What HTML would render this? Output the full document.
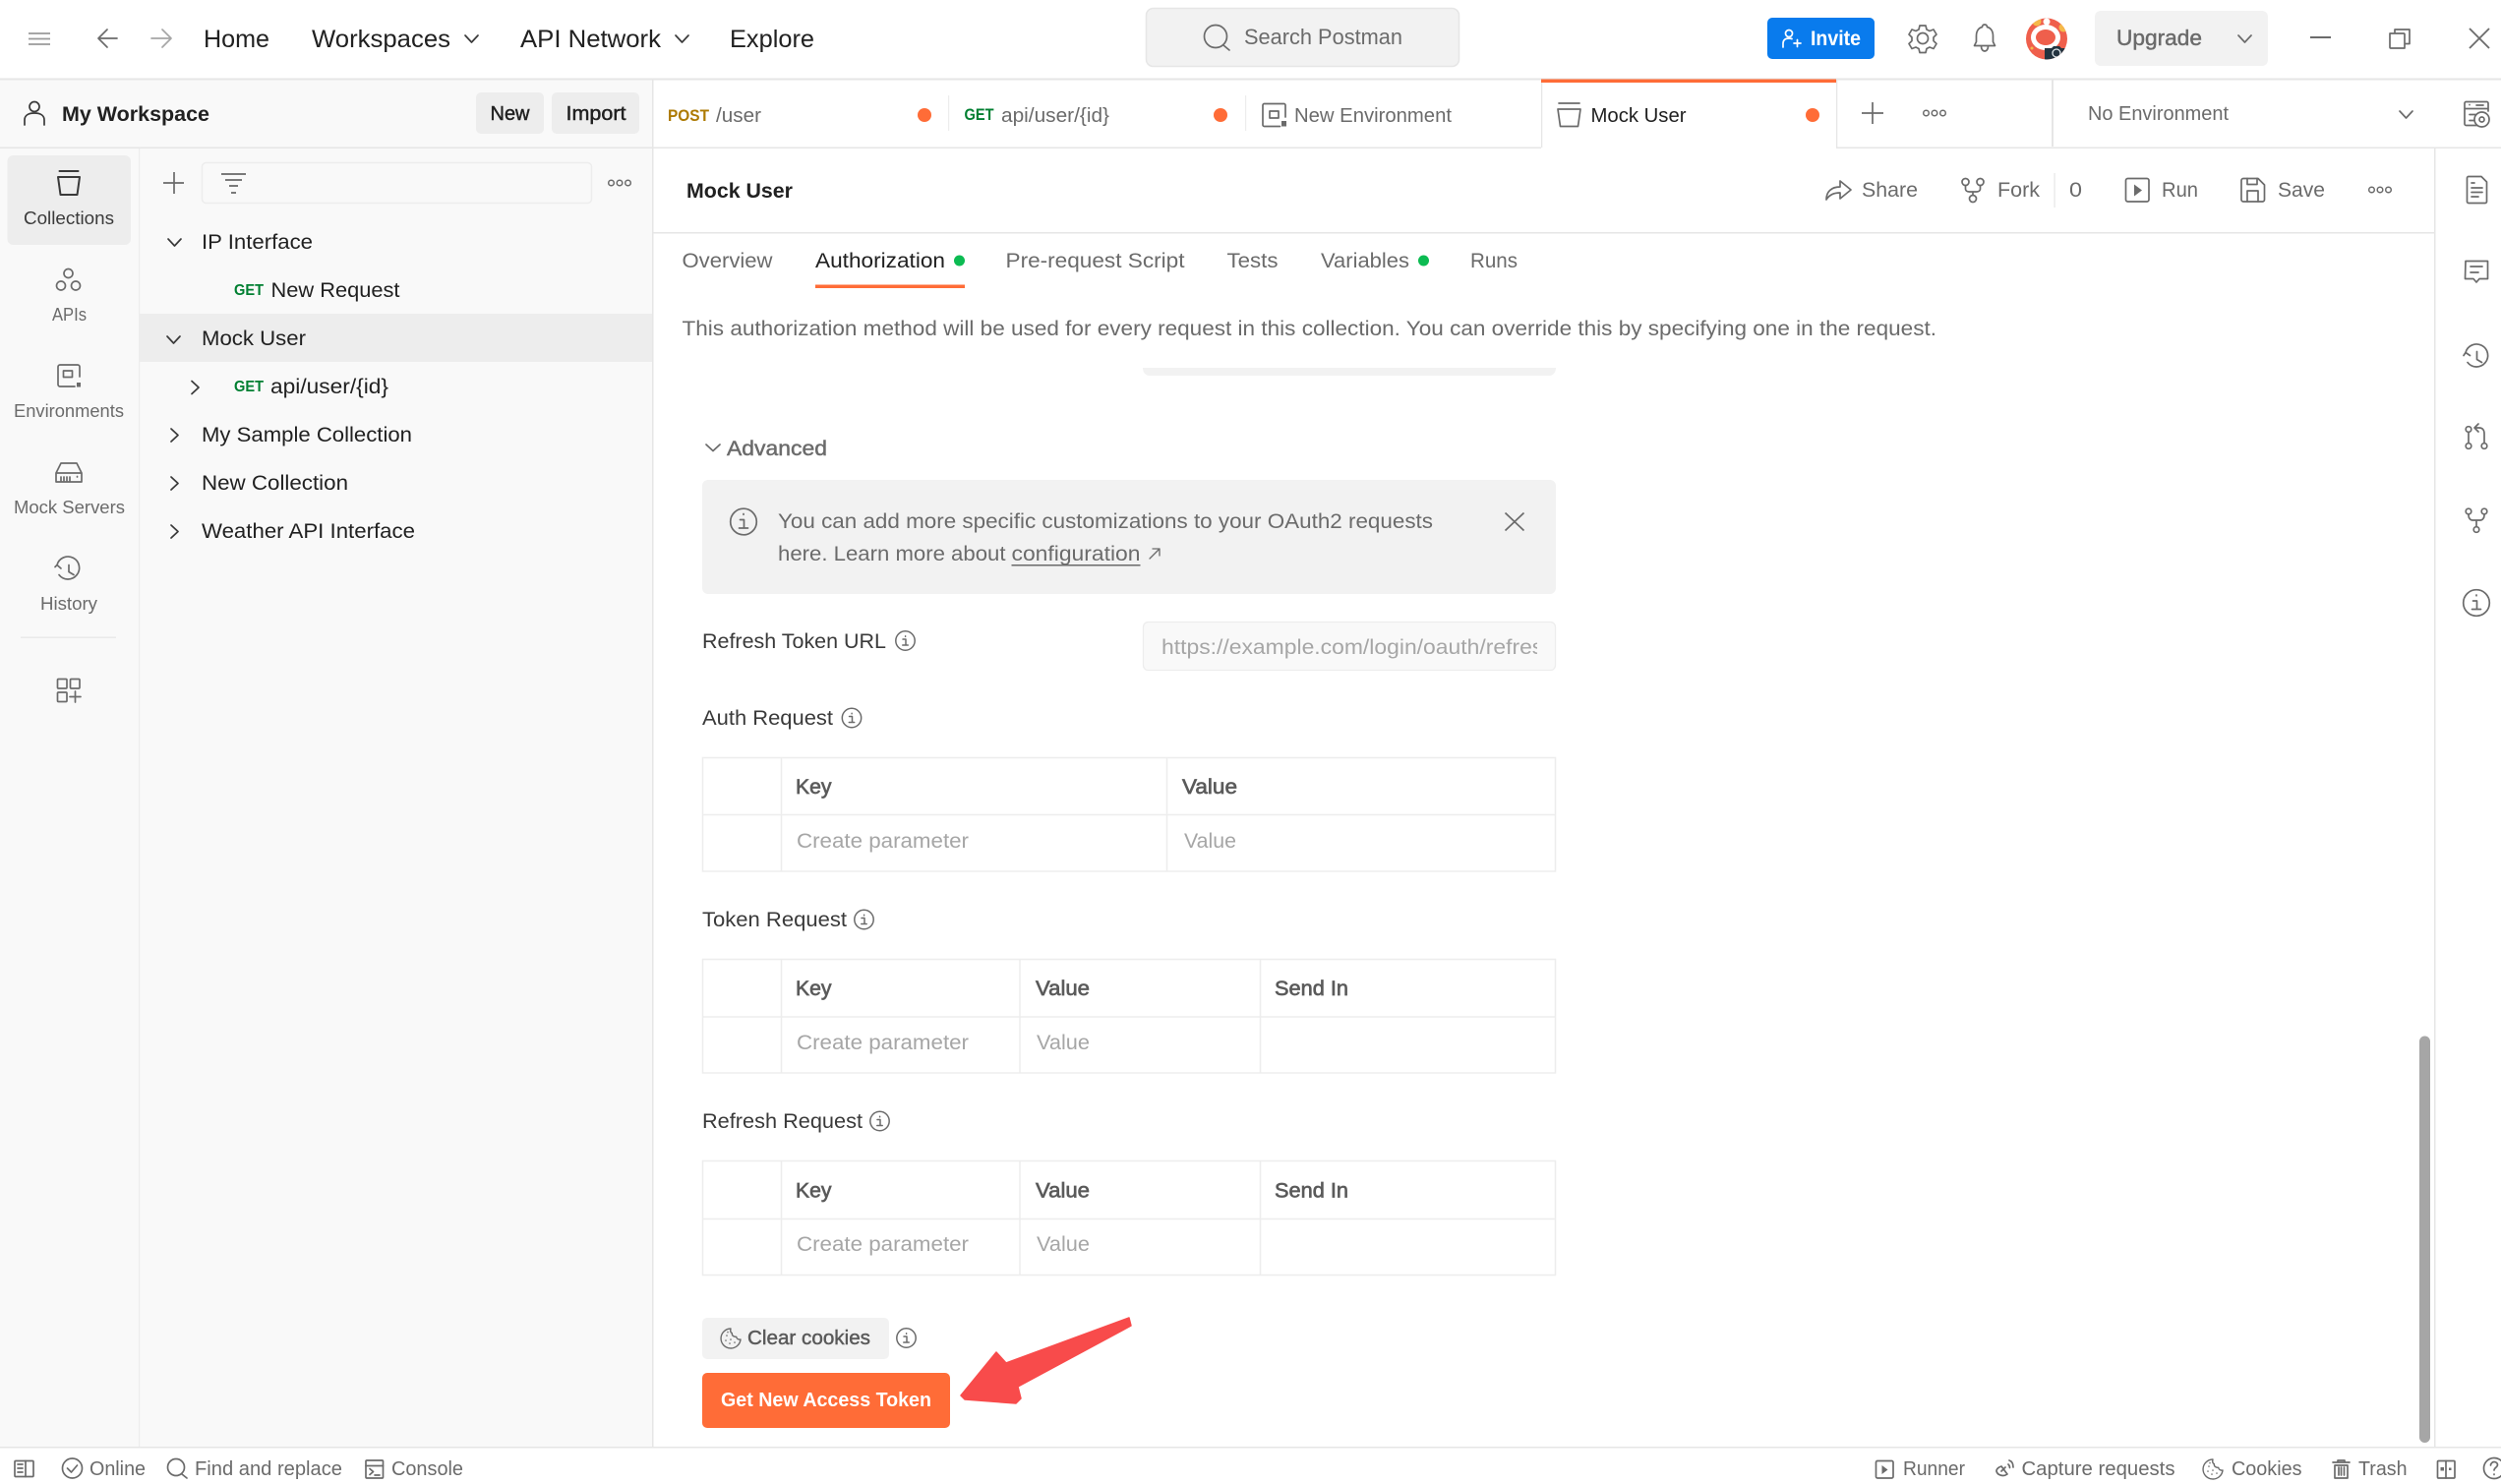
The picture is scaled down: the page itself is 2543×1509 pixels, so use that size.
<!DOCTYPE html>
<html><head><meta charset="utf-8"><title>Postman</title>
<style>
html,body{margin:0;padding:0;background:#fff;overflow:hidden}
svg{display:block}
text{font-family:"Liberation Sans",sans-serif;font-size:21px;fill:#212121;white-space:pre}
.g{fill:#6b6b6b}
.l{fill:#a6a6a6}
.d{fill:#3a3a3a}
.m{stroke:currentColor;stroke-width:.45}
.k{fill:#5a5a5a;color:#5a5a5a;stroke:#5a5a5a;stroke-width:.65}
.b{font-weight:700}
.s{font-size:18px}
.t{font-size:25px}
.st{font-size:20px;fill:#6b6b6b}
.i{fill:none;stroke:#6b6b6b;stroke-width:1.7;stroke-linecap:round;stroke-linejoin:round}
.ln{fill:#e6e6e6}
</style></head><body>
<svg width="2543" height="1509" viewBox="0 0 2543 1509" xmlns="http://www.w3.org/2000/svg">
<defs>
<g id="info" class="i" style="stroke-width:1.5"><circle cx="10.5" cy="10.5" r="9.7"/><path d="M8 9h3v6M7.8 15h5.4M10.6 5.8v.5"/></g>
<g id="ooo" class="i" style="stroke-width:1.5"><circle cx="3.5" cy="3.5" r="2.8"/><circle cx="12" cy="3.5" r="2.8"/><circle cx="20.5" cy="3.5" r="2.8"/></g>
<path id="cd" class="i" d="M1 1l6.5 7L14 1"/>
<path id="cr" class="i" style="stroke:#3a3a3a" d="M1 1l7 6.5L1 14"/>
<path id="cds" class="i" style="stroke:#3a3a3a" d="M1 1l6.5 7L14 1"/>
<g id="cookie" class="i" style="stroke-width:1.4"><path d="M10 1a10 10 0 1 0 10 11c-2 .5-4-.5-4.300-2.700C13 9.500 11 8 11.300 5.500 9.800 5 9.500 3 10 1z"/><path d="M6 8v.3M5 13v.3M10 12v.3M9 16v.3M14 15v.3M7 4.500v.3"/></g>
<clipPath id="urlc"><rect x="1170" y="640" width="393" height="36"/></clipPath>
<clipPath id="av"><circle cx="2081" cy="39.500" r="21"/></clipPath>
</defs>

<rect width="2543" height="1509" fill="#fff"/>

<!-- top bar -->
<path d="M29 34h22M29 39.500h22M29 45h22" fill="none" stroke="#9a9a9a" stroke-width="1.700"/>
<path class="i" d="M119 39H100M109 30l-9 9 9 9"/>
<path class="i" style="stroke:#a6a6a6" d="M154 39h20M165 30l9 9-9 9"/>
<text class="t" x="207" y="48" textLength="67" lengthAdjust="spacingAndGlyphs">Home</text>
<text class="t" x="317" y="48" textLength="141" lengthAdjust="spacingAndGlyphs">Workspaces</text>
<use href="#cds" x="472" y="35"/>
<text class="t" x="529" y="48" textLength="143" lengthAdjust="spacingAndGlyphs">API Network</text>
<use href="#cds" x="686" y="35"/>
<text class="t" x="742" y="48" textLength="86" lengthAdjust="spacingAndGlyphs">Explore</text>

<rect x="1165.500" y="8.500" width="318" height="59" rx="7" fill="#f2f2f2" stroke="#e6e6e6" stroke-width="1.500"/>
<circle cx="1236" cy="37" r="11.500" class="i"/><path class="i" d="M1244 46l6 5"/>
<text class="g" x="1265" y="45" style="font-size:22px" textLength="161" lengthAdjust="spacingAndGlyphs">Search Postman</text>

<rect x="1797" y="18" width="109" height="42" rx="5" fill="#097bed"/>
<g class="i"><circle cx="1819" cy="34" r="3.500" style="stroke:#fff"/><path style="stroke:#fff" d="M1813 48v-4c0-3 2-5 6-5 1 0 2 .2 3 .5M1824 44h7M1827.500 40.500v7"/></g>
<text x="1841" y="46" class="b" style="fill:#fff;font-size:21px" textLength="51" lengthAdjust="spacingAndGlyphs">Invite</text>

<g class="i" transform="translate(1941 25)"><path d="M11 1h6l1 4 3 1.500 4-1.500 3 5-3 3v3.500l3 3-3 5-4-1.500-3 1.500-1 4h-6l-1-4-3-1.500-4 1.500-3-5 3-3V13l-3-3 3-5 4 1.500 3-1.500z"/><circle cx="14" cy="14" r="5.500"/></g>
<path class="i" d="M2018 25c2 0 2.500 1.500 2.500 2.500 4 1 6 4.500 6 9v6l2 4h-21l2-4v-6c0-4.500 2-8 6-9 0-1 .500-2.500 2.500-2.500zM2014.500 47c0 3 1.500 5 3.500 5s3.500-2 3.500-5"/>

<g clip-path="url(#av)">
<rect x="2058" y="17" width="46" height="46" fill="#ef5f4c"/>
<circle cx="2071" cy="22" r="4.500" fill="#f5b94a"/><circle cx="2098" cy="28" r="4.500" fill="#f5b94a"/><circle cx="2066" cy="49" r="1.500" fill="#f5b94a"/>
<ellipse cx="2080" cy="38" rx="15" ry="13" fill="#fff"/><ellipse cx="2080" cy="38" rx="10" ry="8" fill="#ef5f4c"/>
<path d="M2079 22h4v6h-4z" fill="#fff"/><circle cx="2081" cy="22" r="3.500" fill="#fff"/>
<path d="M2079 49h7l2-2h6l2 2h10v14h-27z" fill="#23333f"/><circle cx="2091" cy="54" r="4" fill="none" stroke="#dfe6ea" stroke-width="1.300"/>
</g>

<rect x="2130" y="11" width="176" height="56" rx="6" fill="#f2f2f2"/>
<text class="g m" x="2152" y="46" style="font-size:22px;color:#6b6b6b" textLength="87" lengthAdjust="spacingAndGlyphs">Upgrade</text>
<use href="#cd" x="2275" y="35"/>
<path d="M2349 38h21" stroke="#6b6b6b" stroke-width="2"/>
<path class="i" d="M2430 34h14a1 1 0 0 1 1 1v14h-14a1 1 0 0 1-1-1zM2435 34v-4h15v14.500h-5"/>
<path d="M2511 29l20 20M2531 29l-20 20" fill="none" stroke="#6b6b6b" stroke-width="1.800"/>
<rect x="0" y="79.500" width="2543" height="2" class="ln"/>

<!-- sidebar -->
<rect x="0" y="81.500" width="663" height="1390" fill="#f9f9f9"/>
<rect x="663" y="81.500" width="1.500" height="1390" class="ln"/>
<rect x="0" y="149.500" width="663" height="1.500" class="ln"/>
<rect x="141" y="151" width="1.300" height="1320" fill="#ededed"/>

<circle cx="35" cy="108.500" r="5" class="i" style="stroke:#3a3a3a"/><path class="i" style="stroke:#3a3a3a" d="M25 127v-5c0-4 3-7 10-7s10 3 10 7v5"/>
<text class="b" x="63" y="123" textLength="150" lengthAdjust="spacingAndGlyphs" style="font-size:21px">My Workspace</text>
<rect x="484" y="94" width="69" height="42" rx="5" fill="#ededed"/>
<text class="m" x="498.500" y="122" style="font-size:20px;color:#212121" textLength="40" lengthAdjust="spacingAndGlyphs">New</text>
<rect x="561" y="94" width="89" height="42" rx="5" fill="#ededed"/>
<text class="m" x="575.500" y="122" style="font-size:20px;color:#212121" textLength="61" lengthAdjust="spacingAndGlyphs">Import</text>

<rect x="7.500" y="158" width="125.500" height="91" rx="6" fill="#ededed"/>
<path class="i" style="stroke:#3a3a3a;stroke-width:2" d="M60.500 174h19M59 180h22l-2.500 18H61.500z"/>
<text class="s" x="24" y="228" textLength="92" lengthAdjust="spacingAndGlyphs" style="fill:#3a3a3a">Collections</text>

<g class="i"><circle cx="69.500" cy="278" r="4.500"/><circle cx="62" cy="290.500" r="4.500"/><circle cx="77" cy="290.500" r="4.500"/></g>
<text class="s g" x="53" y="326" textLength="35" lengthAdjust="spacingAndGlyphs">APIs</text>
<g class="i"><path d="M81 383v-10a2 2 0 0 0-2-2H61a2 2 0 0 0-2 2v18a2 2 0 0 0 2 2h15"/><rect x="64.500" y="377" width="9" height="6.500"/></g><rect x="78" y="389" width="4" height="4.500" fill="#6b6b6b"/>
<text class="s g" x="14" y="424" textLength="112" lengthAdjust="spacingAndGlyphs">Environments</text>
<g class="i"><path d="M57 481l5-10h16l5 10v9H57zM57 481h26"/><path d="M62 485v4M65 485v4M68 485v4M71 485v4"/><path d="M78.500 484.500v.5"/></g>
<text class="s g" x="14" y="522" textLength="113" lengthAdjust="spacingAndGlyphs">Mock Servers</text>
<g class="i" transform="translate(0 2.500)"><path d="M60 582a11.500 11.500 0 1 0-2-10l-2 2M58 572l4 3.500"/><path d="M70 572v7l5 3"/></g>
<text class="s g" x="41" y="620" textLength="58" lengthAdjust="spacingAndGlyphs">History</text>
<rect x="21" y="647.500" width="97" height="1.300" fill="#e6e6e6"/>
<g class="i"><rect x="58.500" y="690.500" width="9.500" height="9.500" rx="1"/><rect x="71.500" y="690.500" width="9.500" height="9.500" rx="1"/><rect x="58.500" y="704" width="9.500" height="9.500" rx="1"/><path d="M71 708.500h11M76.500 703v11"/></g>

<path d="M177 175v22M166 186h21" fill="none" stroke="#6b6b6b" stroke-width="1.700"/>
<rect x="205.500" y="165.500" width="396" height="41" rx="4" fill="#f9f9f9" stroke="#ededed" stroke-width="1.500"/>
<path d="M225 177h25M229 183h17M233 189h9M235 196h5" fill="none" stroke="#7a7a7a" stroke-width="2"/>
<use href="#ooo" x="618" y="182.500"/>

<use href="#cds" x="170" y="242"/>
<text x="205" y="253" textLength="113" lengthAdjust="spacingAndGlyphs">IP Interface</text>
<text class="b" x="238" y="300" style="font-size:16px;fill:#007f31" textLength="30" lengthAdjust="spacingAndGlyphs">GET</text>
<text x="275.500" y="302" textLength="131" lengthAdjust="spacingAndGlyphs">New Request</text>
<rect x="141.500" y="319" width="521.500" height="49" fill="#ededed"/>
<use href="#cds" x="169" y="341"/>
<text x="205" y="351" textLength="106" lengthAdjust="spacingAndGlyphs">Mock User</text>
<use href="#cr" x="194" y="386.500"/>
<text class="b" x="238" y="398" style="font-size:16px;fill:#007f31" textLength="30" lengthAdjust="spacingAndGlyphs">GET</text>
<text x="275" y="400" textLength="120" lengthAdjust="spacingAndGlyphs">api/user/{id}</text>
<use href="#cr" x="173" y="435"/>
<text x="205" y="449" textLength="214" lengthAdjust="spacingAndGlyphs">My Sample Collection</text>
<use href="#cr" x="173" y="484"/>
<text x="205" y="498" textLength="149" lengthAdjust="spacingAndGlyphs">New Collection</text>
<use href="#cr" x="173" y="533"/>
<text x="205" y="547" textLength="217" lengthAdjust="spacingAndGlyphs">Weather API Interface</text>

<!-- tabs -->
<rect x="664.500" y="149.500" width="902.500" height="1.500" class="ln"/>
<rect x="1867" y="149.500" width="676" height="1.500" class="ln"/>
<rect x="1567" y="81" width="1.300" height="69" class="ln"/>
<rect x="1867" y="81" width="1.300" height="69" class="ln"/>
<rect x="1567" y="80.500" width="300" height="3.500" fill="#ff6c37"/>
<text class="b" x="679" y="123" style="font-size:16.500px;fill:#ad7a03" textLength="42" lengthAdjust="spacingAndGlyphs">POST</text>
<text class="g" x="728" y="124" style="font-size:20.500px" textLength="46" lengthAdjust="spacingAndGlyphs">/user</text>
<circle cx="940" cy="117" r="7" fill="#ff6c37"/>
<rect x="964" y="97" width="1.200" height="36" fill="#ededed"/>
<text class="b" x="980.500" y="122" style="font-size:16.500px;fill:#007f31" textLength="30" lengthAdjust="spacingAndGlyphs">GET</text>
<text class="g" x="1018" y="124" style="font-size:20.500px" textLength="110" lengthAdjust="spacingAndGlyphs">api/user/{id}</text>
<circle cx="1241" cy="117" r="7" fill="#ff6c37"/>
<rect x="1266" y="97" width="1.200" height="36" fill="#ededed"/>
<g class="i"><path d="M1307 119v-12a1.500 1.500 0 0 0-1.500-1.500h-20a1.500 1.500 0 0 0-1.500 1.500v20a1.500 1.500 0 0 0 1.500 1.500h16"/><rect x="1291" y="113" width="9" height="7"/></g><rect x="1303" y="123" width="5" height="5.500" fill="#6b6b6b"/>
<text class="g" x="1316" y="124" style="font-size:20.500px" textLength="160" lengthAdjust="spacingAndGlyphs">New Environment</text>
<path class="i" d="M1585 105h21M1584 111h23l-2.500 17.500h-18z"/>
<text x="1617.500" y="124" style="font-size:20.500px" textLength="97" lengthAdjust="spacingAndGlyphs">Mock User</text>
<circle cx="1843" cy="117" r="7" fill="#ff6c37"/>
<path d="M1904 104v22M1893 115h22" fill="none" stroke="#6b6b6b" stroke-width="1.700"/>
<use href="#ooo" x="1955" y="111.500"/>
<rect x="2086" y="81" width="2" height="68" class="ln"/>
<text class="g" x="2123" y="122" style="font-size:20px" textLength="143" lengthAdjust="spacingAndGlyphs">No Environment</text>
<use href="#cd" x="2439" y="112"/>
<g class="i"><path d="M2530 113v-8a1.500 1.500 0 0 0-1.500-1.500h-21a1.500 1.500 0 0 0-1.500 1.500v21a1.500 1.500 0 0 0 1.500 1.500h11M2506 110.500h24M2511 116.500h7M2511 122.500h5M2511 106.500v.1M2518 107h7"/><circle cx="2523.500" cy="121.500" r="7.500"/><circle cx="2523.500" cy="121.500" r="2.500"/></g>

<!-- right rail line -->
<rect x="2475" y="151" width="1.500" height="1320" class="ln"/>

<!-- header row -->
<text class="b" x="698" y="201" style="font-size:21.500px" textLength="108" lengthAdjust="spacingAndGlyphs">Mock User</text>
<rect x="664.500" y="236" width="1810.500" height="1.500" class="ln"/>
<path class="i" d="M1857 203c0-8 5-13 14-13v-6l11 9-11 9v-6c-6 0-11 2-14 7z"/>
<text class="g" x="1893" y="200" style="font-size:21px" textLength="57" lengthAdjust="spacingAndGlyphs">Share</text>
<g class="i"><circle cx="1998.500" cy="185" r="3.500"/><circle cx="2013.500" cy="185" r="3.500"/><circle cx="2006" cy="202" r="3.500"/><path d="M1998.500 189v3c0 2 2 3 4 3h7c2 0 4-1 4-3v-3M2006 195v3.500"/></g>
<text class="g" x="2031" y="200" style="font-size:21px" textLength="43" lengthAdjust="spacingAndGlyphs">Fork</text>
<rect x="2088.500" y="176" width="1.200" height="35" class="ln"/>
<text class="g" x="2104" y="200" style="font-size:21px" textLength="13" lengthAdjust="spacingAndGlyphs">0</text>
<rect x="2161.500" y="181.500" width="23.500" height="23.500" rx="2" class="i"/><path d="M2170 187.500l8 6-8 6z" fill="#6b6b6b"/>
<text class="g" x="2198" y="200" style="font-size:21px" textLength="37" lengthAdjust="spacingAndGlyphs">Run</text>
<g class="i"><path d="M2281 181.500h15l6.500 6.500v15a2 2 0 0 1-2 2h-19.500a2 2 0 0 1-2-2v-19.500a2 2 0 0 1 2-2z"/><path d="M2285 181.500v6h10v-6M2285 205v-11h11v11"/></g>
<text class="g" x="2316" y="200" style="font-size:21px" textLength="48" lengthAdjust="spacingAndGlyphs">Save</text>
<use href="#ooo" x="2408" y="189.500"/>

<!-- right rail icons -->
<g class="i"><path d="M2510 179.500h13l5.500 5.500v20a1.500 1.500 0 0 1-1.500 1.500h-17a1.500 1.500 0 0 1-1.500-1.500v-24a1.500 1.500 0 0 1 1.500-1.500zM2513 186h3M2513 191h11M2513 195.500h11M2513 200h7"/></g>
<g class="i"><path d="M2507 265.500h22.500v18h-8.500l-3 3.500-3-3.500h-8.500zM2512 271h12M2512 277h8"/></g>
<g class="i" transform="translate(0 1.500)"><path d="M2509 367a11.500 11.500 0 1 0-2-10l-2 3M2507 357l4.500 3"/><path d="M2518.500 356v8l5 3"/></g>
<g class="i"><circle cx="2510" cy="436.500" r="2.800"/><circle cx="2510" cy="453.500" r="2.800"/><circle cx="2526" cy="453.500" r="2.800"/><path d="M2510 440v10M2526 450v-9c0-4-2-6-5-6h-4M2520 431l-4 4 4 4"/></g>
<g class="i"><circle cx="2510" cy="520" r="2.800"/><circle cx="2526" cy="520" r="2.800"/><circle cx="2518" cy="538.500" r="2.800"/><path d="M2510 523v1c0 3 2 5 4 5h8c2 0 4-2 4-5v-1M2518 529v6"/></g>
<g class="i"><circle cx="2518" cy="613" r="13.300"/><path d="M2514.500 611h4v8.500M2513.500 619.500h9M2518 605v.8"/></g>

<!-- tabs row -->
<text class="g" x="693.500" y="272" textLength="92" lengthAdjust="spacingAndGlyphs">Overview</text>
<text x="829" y="272" textLength="132" lengthAdjust="spacingAndGlyphs">Authorization</text>
<circle cx="975.500" cy="265" r="5.500" fill="#0cbb52"/>
<rect x="829" y="289.500" width="152" height="3.500" fill="#ff6c37"/>
<text class="g" x="1022.500" y="272" textLength="182" lengthAdjust="spacingAndGlyphs">Pre-request Script</text>
<text class="g" x="1247.500" y="272" textLength="52" lengthAdjust="spacingAndGlyphs">Tests</text>
<text class="g" x="1343" y="272" textLength="90" lengthAdjust="spacingAndGlyphs">Variables</text>
<circle cx="1447.500" cy="265" r="5.500" fill="#0cbb52"/>
<text class="g" x="1495" y="272" textLength="48" lengthAdjust="spacingAndGlyphs">Runs</text>
<text class="g" x="693.500" y="341" textLength="1275.500" lengthAdjust="spacingAndGlyphs">This authorization method will be used for every request in this collection. You can override this by specifying one in the request.</text>

<path d="M1162 374h420c0 5-3 8-7 8h-406c-4 0-7-3-7-8z" fill="#f2f2f2"/>

<!-- advanced -->
<path class="i" d="M718 452l7 6.500 7-6.500"/>
<text class="g m" x="739" y="463" style="color:#6b6b6b" textLength="102" lengthAdjust="spacingAndGlyphs">Advanced</text>
<rect x="714" y="488" width="868" height="116" rx="6" fill="#f2f2f2"/>
<g class="i"><circle cx="756" cy="530.500" r="13.300"/><path d="M752.500 528.500h4v8.500M751.500 537h9M756 522.500v.8"/></g>
<text class="g" x="791" y="537" textLength="666" lengthAdjust="spacingAndGlyphs">You can add more specific customizations to your OAuth2 requests</text>
<text class="g" x="791" y="570" textLength="231.500" lengthAdjust="spacingAndGlyphs">here. Learn more about</text>
<text class="g" x="1028.500" y="570" textLength="131" lengthAdjust="spacingAndGlyphs">configuration</text>
<rect x="1028.500" y="574" width="131" height="1.500" fill="#6b6b6b"/>
<path class="i" d="M1169 568l10-10M1172 558h7v7" style="stroke-width:1.300"/>
<path d="M1530.500 521.500l19 18M1549.500 521.500l-19 18" fill="none" stroke="#6b6b6b" stroke-width="1.700"/>

<text class="d" x="714" y="659" textLength="187" lengthAdjust="spacingAndGlyphs">Refresh Token URL</text>
<use href="#info" x="910" y="641"/>
<rect x="1162.500" y="632.500" width="419" height="49" rx="5" fill="#f9f9f9" stroke="#ededed" stroke-width="1.300"/>
<text class="l" x="1181" y="665" clip-path="url(#urlc)" textLength="401" lengthAdjust="spacingAndGlyphs">https://example.com/login/oauth/refresh</text>

<text class="d" x="714" y="737" textLength="133" lengthAdjust="spacingAndGlyphs">Auth Request</text>
<use href="#info" x="855.500" y="719.500"/>
<g fill="none" stroke="#ededed" stroke-width="1.500"><rect x="714.500" y="770.500" width="867" height="115.500"/><path d="M714 828.500h868M794.500 771v115M1186.500 771v115"/></g>
<text class="k" x="809" y="807" textLength="36.500" lengthAdjust="spacingAndGlyphs">Key</text>
<text class="k" x="1202" y="807" textLength="56" lengthAdjust="spacingAndGlyphs">Value</text>
<text class="l" x="810" y="862" textLength="175" lengthAdjust="spacingAndGlyphs">Create parameter</text>
<text class="l" x="1204" y="862" textLength="53" lengthAdjust="spacingAndGlyphs">Value</text>

<text class="d" x="714" y="942" textLength="147" lengthAdjust="spacingAndGlyphs">Token Request</text>
<use href="#info" x="868" y="924.500"/>
<g fill="none" stroke="#ededed" stroke-width="1.500"><rect x="714.500" y="975.500" width="867" height="115.500"/><path d="M714 1034h868M794.500 976v115M1037 976v115M1281.500 976v115"/></g>
<text class="k" x="809" y="1012" textLength="36.500" lengthAdjust="spacingAndGlyphs">Key</text>
<text class="k" x="1053" y="1012" textLength="55" lengthAdjust="spacingAndGlyphs">Value</text>
<text class="k" x="1296" y="1012" textLength="75" lengthAdjust="spacingAndGlyphs">Send In</text>
<text class="l" x="810" y="1067" textLength="175" lengthAdjust="spacingAndGlyphs">Create parameter</text>
<text class="l" x="1054" y="1067" textLength="54" lengthAdjust="spacingAndGlyphs">Value</text>

<text class="d" x="714" y="1147" textLength="163" lengthAdjust="spacingAndGlyphs">Refresh Request</text>
<use href="#info" x="884" y="1129.500"/>
<g fill="none" stroke="#ededed" stroke-width="1.500"><rect x="714.500" y="1180.500" width="867" height="116"/><path d="M714 1239.500h868M794.500 1181v115M1037 1181v115M1281.500 1181v115"/></g>
<text class="k" x="809" y="1217.500" textLength="36.500" lengthAdjust="spacingAndGlyphs">Key</text>
<text class="k" x="1053" y="1217.500" textLength="55" lengthAdjust="spacingAndGlyphs">Value</text>
<text class="k" x="1296" y="1217.500" textLength="75" lengthAdjust="spacingAndGlyphs">Send In</text>
<text class="l" x="810" y="1272" textLength="175" lengthAdjust="spacingAndGlyphs">Create parameter</text>
<text class="l" x="1054" y="1272" textLength="54" lengthAdjust="spacingAndGlyphs">Value</text>

<rect x="714" y="1340" width="190" height="42" rx="5" fill="#f2f2f2"/>
<use href="#cookie" x="733" y="1350"/>
<text class="m" x="760" y="1367" style="font-size:20px;fill:#5a5a5a;color:#5a5a5a" textLength="125" lengthAdjust="spacingAndGlyphs">Clear cookies</text>
<use href="#info" x="911" y="1350"/>
<rect x="714" y="1396" width="252" height="56" rx="5" fill="#ff6c37"/>
<text class="b" x="733" y="1430" style="font-size:20px;fill:#fff" textLength="214" lengthAdjust="spacingAndGlyphs">Get New Access Token</text>
<path d="M1148 1340l2 8-115 62 3 12-5 5-52-4-4-4 36-44 10 11z" fill="#f84b4b" stroke="#f84b4b" stroke-width="1.500" stroke-linejoin="round"/>

<!-- scrollbar -->
<rect x="2460" y="1053.500" width="11" height="413.500" rx="5.500" fill="#a6a6a6"/>

<!-- status bar -->
<rect x="0" y="1471" width="2543" height="1.500" class="ln"/>
<g class="i"><rect x="15" y="1485.500" width="19" height="16" rx="1"/><path d="M26 1485.500v16M18 1489h5M18 1493h5M18 1497h5"/></g>
<g class="i"><circle cx="73.500" cy="1493" r="10"/><path d="M68.500 1493l4 4 6-7"/></g>
<text class="st" x="91" y="1500" textLength="57" lengthAdjust="spacingAndGlyphs">Online</text>
<circle cx="179" cy="1492" r="8.500" class="i"/><path class="i" d="M185 1499l5 4"/>
<text class="st" x="198" y="1500" textLength="150" lengthAdjust="spacingAndGlyphs">Find and replace</text>
<g class="i"><rect x="372" y="1485" width="17.500" height="18" rx="1"/><path d="M372 1490.500h17.500M376 1493.500l3.500 3-3.500 3M381 1500h5"/></g>
<text class="st" x="398" y="1500" textLength="73" lengthAdjust="spacingAndGlyphs">Console</text>
<rect x="1907.500" y="1485.500" width="17.500" height="17.500" rx="1.500" class="i"/><path d="M1913.500 1490l6 4.500-6 4.500z" fill="#6b6b6b"/>
<text class="st" x="1935" y="1500" textLength="63" lengthAdjust="spacingAndGlyphs">Runner</text>
<g class="i"><path d="M2035 1491l6 8c-4 3-10 1-11-3-.3-2 2-4 5-5zM2035 1496l4-4M2042 1489c1 1 1.500 2 1.500 3.500M2043 1485c3 1 4 4 4 7"/></g>
<text class="st" x="2055.500" y="1500" textLength="156" lengthAdjust="spacingAndGlyphs">Capture requests</text>
<use href="#cookie" x="2240" y="1483"/>
<text class="st" x="2269" y="1500" textLength="71.500" lengthAdjust="spacingAndGlyphs">Cookies</text>
<g class="i"><path d="M2372 1487h17M2377 1487v-2h7v2M2374 1490h13v13h-13zM2378 1492v8M2380.500 1492v8M2383.500 1492v8"/></g>
<text class="st" x="2398" y="1500" textLength="49.500" lengthAdjust="spacingAndGlyphs">Trash</text>
<g class="i"><rect x="2478.500" y="1485.500" width="17.500" height="17.500" rx="1"/><path d="M2487 1485.500v17.500"/></g><rect x="2481.500" y="1492" width="3.500" height="3.500" fill="#6b6b6b"/><rect x="2490" y="1492.500" width="2.500" height="2.500" fill="#6b6b6b"/>
<g class="i"><circle cx="2536" cy="1493" r="10.500"/><path d="M2532.500 1490c0-2 2-3.500 3.500-3.500s3.500 1 3.500 3c0 2.500-3.500 3-3.500 5.500M2536 1499v.5"/></g>
</svg>
</body></html>
